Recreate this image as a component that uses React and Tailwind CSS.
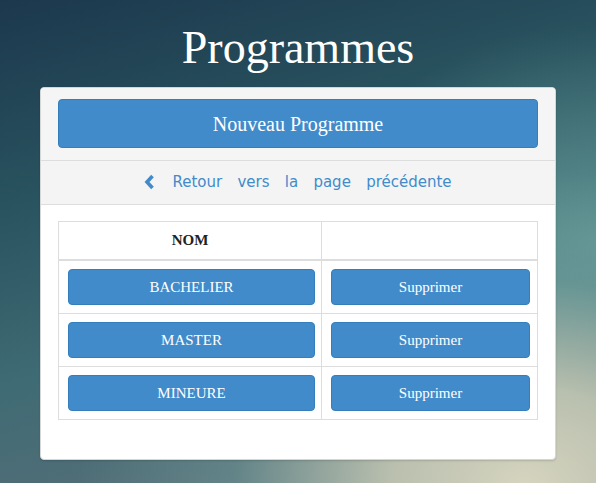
const programmes = ['BACHELIER', 'MASTER', 'MINEURE'];

function ChevronLeft() {
  return (
    <svg width="11" height="16" viewBox="0 0 11 16" className="shrink-0">
      <polyline
        points="8.5,2 3,8 8.5,14"
        fill="none"
        stroke="#428bca"
        strokeWidth="3.6"
        strokeLinejoin="miter"
      />
    </svg>
  );
}

function BlueButton({ children, className = '' }) {
  return (
    <button
      className={`flex w-full items-center justify-center rounded-[4px] border border-[#357ebd] bg-[#428bca] text-white ${className}`}
    >
      {children}
    </button>
  );
}

export default function App() {
  return (
    <div className="min-h-[483px] w-full bg-[radial-gradient(ellipse_75%_65%_at_88%_100%,#d5d4bf_0%,rgba(196,200,180,0.9)_30%,rgba(120,165,160,0.4)_65%,rgba(90,140,145,0)_100%),radial-gradient(ellipse_45%_45%_at_100%_50%,rgba(100,155,152,0.8)_0%,rgba(90,140,145,0)_100%),linear-gradient(165deg,#1c384d_0%,#29535f_32%,#3f6b74_60%,#62707a_100%)] font-['Liberation_Serif',serif] pb-[24px]">
      <h1 className="pt-[25px] pb-[16px] text-center text-[46px] leading-none text-white">
        Programmes
      </h1>

      <div className="mx-auto w-[516px] overflow-hidden rounded-[4px] border border-[#d6d6d6] bg-white shadow-[0_1px_2px_rgba(0,0,0,0.15)]">
        <div className="border-b border-[#dddddd] bg-[#f5f5f5] px-[17px] pt-[11px] pb-[12px]">
          <BlueButton className="h-[49px] text-[20px]">Nouveau Programme</BlueButton>
        </div>

        <div className="flex items-center justify-center gap-[17px] border-b border-[#dddddd] bg-[#f4f4f4] pt-[11px] pb-[12px]">
          <ChevronLeft />
          <a className="font-['DejaVu_Sans',sans-serif] text-[15px] leading-[20px] text-[#428bca] [word-spacing:10.5px]">
            Retour vers la page précédente
          </a>
        </div>

        <div className="px-[17px] pt-[16px] pb-[39px]">
          <div className="border border-[#dddddd]">
            <div className="grid grid-cols-[263px_1fr] border-b-2 border-[#dddddd]">
              <div className="flex h-[37px] items-center justify-center border-r border-[#dddddd] text-[15px] font-bold text-[#222]">
                NOM
              </div>
              <div />
            </div>
            {programmes.map((nom, i) => (
              <div
                key={nom}
                className={`grid grid-cols-[263px_1fr] ${i < programmes.length - 1 ? 'border-b border-[#dddddd]' : ''}`}
              >
                <div className="border-r border-[#dddddd] pt-[8px] pb-[8px] pl-[9px] pr-[6px]">
                  <BlueButton className="h-[36px] text-[15px]">{nom}</BlueButton>
                </div>
                <div className="pt-[8px] pb-[8px] pl-[9px] pr-[7px]">
                  <BlueButton className="h-[36px] text-[15px]">Supprimer</BlueButton>
                </div>
              </div>
            ))}
          </div>
        </div>
      </div>
    </div>
  );
}
